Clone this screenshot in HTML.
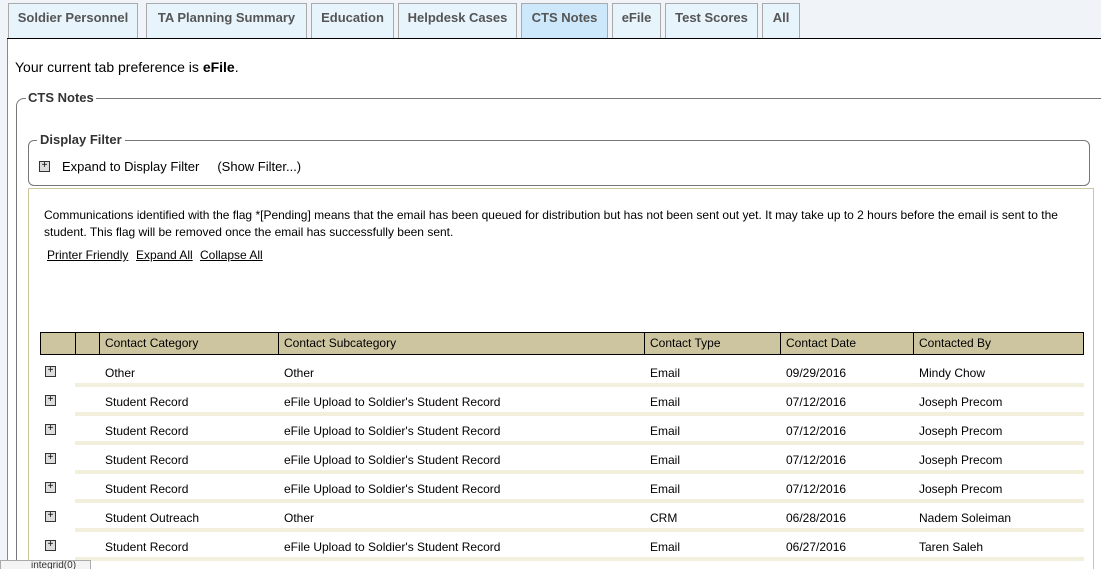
<!DOCTYPE html>
<html style="overflow:hidden"><head><style>
html,body{margin:0;width:1101px;height:569px;overflow:hidden}
body{background:#f0f4f8;font-family:"Liberation Sans",Arial,sans-serif;position:relative}
.a{position:absolute}
.tab{position:absolute;top:3px;height:35px;background:#e8f4fc;border:1px solid #aaa;border-bottom:none;box-sizing:border-box;font-weight:bold;font-size:13px;color:#555;text-align:center;line-height:28px}
.t{font-family:"Liberation Sans",sans-serif;font-size:12px;color:#000}
.pl{position:absolute;width:9px;height:9px;border:1px solid #333;background:#ddd;font-size:10px;line-height:8px;text-align:center;color:#000;font-family:"Liberation Sans",sans-serif}
.band{position:absolute;left:75px;width:1009px;height:4px;background:#f2f0dc}
</style></head><body>
<div class="a" style="left:7px;top:39px;width:1094px;height:530px;background:#fff;border-left:1px solid #888"></div>
<div class="a" style="left:7px;top:38px;width:1094px;height:1px;background:#000"></div>
<div class="tab" style="left:8px;width:130px">Soldier Personnel</div>
<div class="tab" style="left:146px;width:161px">TA Planning Summary</div>
<div class="tab" style="left:311px;width:83px">Education</div>
<div class="tab" style="left:398px;width:119px">Helpdesk Cases</div>
<div class="tab" style="left:521px;width:87px;background:#cce8fa">CTS Notes</div>
<div class="tab" style="left:612px;width:49px">eFile</div>
<div class="tab" style="left:665px;width:93px">Test Scores</div>
<div class="tab" style="left:762px;width:38px">All</div>
<div class="a" style="left:15px;top:59px;font-size:14px">Your current tab preference is <b>eFile</b>.</div>
<div class="a" style="left:16px;top:98px;width:1100px;height:480px;border:1px solid #777;border-radius:8px;box-sizing:border-box"></div>
<div class="a" style="left:26px;top:90px;background:#fff;padding:0 2px;font-size:13px;font-weight:bold;color:#333">CTS Notes</div>
<div class="a" style="left:28px;top:140px;width:1062px;height:46px;border:1px solid #777;border-radius:6px;box-sizing:border-box"></div>
<div class="a" style="left:37px;top:132px;background:#fff;padding:0 3px;font-size:13px;font-weight:bold;color:#333">Display Filter</div>
<div class="pl" style="left:39px;top:161px">+</div>
<div class="a" style="left:62px;top:159px;font-size:13px">Expand to Display Filter&nbsp;&nbsp;&nbsp;&nbsp; (Show Filter...)</div>
<div class="a" style="left:28px;top:188px;width:1066px;height:400px;border:1px solid #cfc6a0;box-sizing:border-box"></div>
<div class="a t" style="left:44px;top:207px;line-height:17px;width:1030px">Communications identified with the flag *[Pending] means that the email has been queued for distribution but has not been sent out yet. It may take up to 2 hours before the email is sent to the student. This flag will be removed once the email has successfully been sent.</div>
<div class="a t" style="left:47px;top:248px;text-decoration:underline">Printer Friendly</div>
<div class="a t" style="left:136px;top:248px;text-decoration:underline">Expand All</div>
<div class="a t" style="left:200px;top:248px;text-decoration:underline">Collapse All</div>
<div class="a" style="left:40px;top:332px;width:1044px;height:23px;background:#cdc5a0;border:1px solid #000;box-sizing:border-box"></div>
<div class="a" style="left:75px;top:332px;width:1px;height:22px;background:#000"></div>
<div class="a" style="left:99px;top:332px;width:1px;height:22px;background:#000"></div>
<div class="a" style="left:278px;top:332px;width:1px;height:22px;background:#000"></div>
<div class="a" style="left:644px;top:332px;width:1px;height:22px;background:#000"></div>
<div class="a" style="left:780px;top:332px;width:1px;height:22px;background:#000"></div>
<div class="a" style="left:913px;top:332px;width:1px;height:22px;background:#000"></div>
<div class="a t" style="left:105px;top:336px">Contact Category</div>
<div class="a t" style="left:284px;top:336px">Contact Subcategory</div>
<div class="a t" style="left:650px;top:336px">Contact Type</div>
<div class="a t" style="left:786px;top:336px">Contact Date</div>
<div class="a t" style="left:919px;top:336px">Contacted By</div>
<div id="rows"></div>
<script>
var d=[["Other","Other","Email","09/29/2016","Mindy Chow"],
["Student Record","eFile Upload to Soldier's Student Record","Email","07/12/2016","Joseph Precom"],
["Student Record","eFile Upload to Soldier's Student Record","Email","07/12/2016","Joseph Precom"],
["Student Record","eFile Upload to Soldier's Student Record","Email","07/12/2016","Joseph Precom"],
["Student Record","eFile Upload to Soldier's Student Record","Email","07/12/2016","Joseph Precom"],
["Student Outreach","Other","CRM","06/28/2016","Nadem Soleiman"],
["Student Record","eFile Upload to Soldier's Student Record","Email","06/27/2016","Taren Saleh"]];
var x=[105,284,650,786,919],h="";
d.forEach(function(r,i){var y=366+i*29;
h+='<div class="pl" style="left:45px;top:'+y+'px">+</div>';
r.forEach(function(c,j){h+='<div class="a t" style="left:'+x[j]+'px;top:'+y+'px">'+c+'</div>';});
h+='<div class="band" style="top:'+(y+17)+'px"></div>';});
document.getElementById("rows").innerHTML=h;
</script>
<div class="a" style="left:0;top:560px;width:91px;height:12px;background:#f4f4f4;border:1px solid #aaa;box-sizing:border-box;font-size:10px;line-height:10px;color:#333;padding-left:30px;overflow:hidden">integrid(0)</div>
</body></html>
